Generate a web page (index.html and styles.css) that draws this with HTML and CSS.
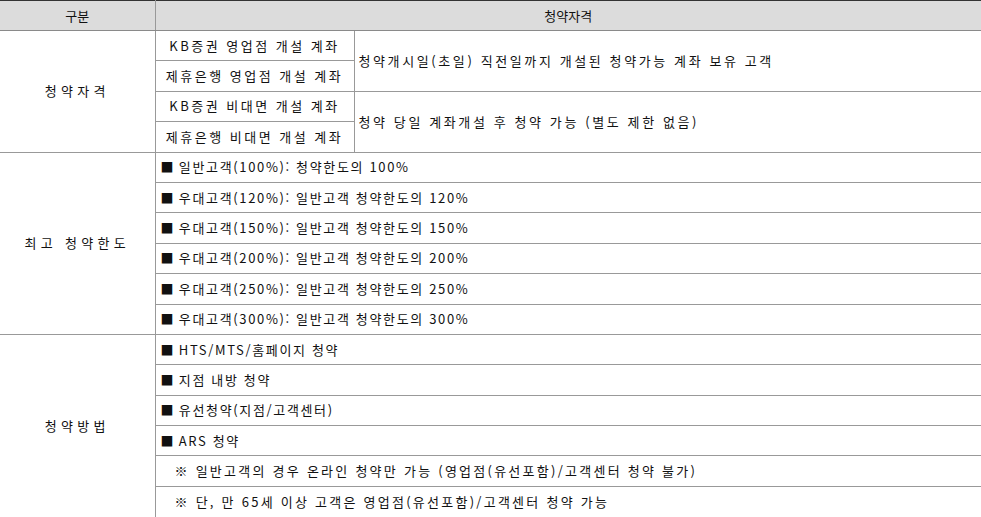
FILE: index.html
```html
<!DOCTYPE html>
<html lang="ko">
<head>
<meta charset="utf-8">
<link rel="stylesheet" href="styles.css">
</head>
<body>
<table class="info">
  <colgroup>
    <col class="c1">
    <col class="c2">
    <col class="c3">
  </colgroup>
  <thead>
    <tr class="head">
      <th>구분</th>
      <th colspan="2">청약자격</th>
    </tr>
  </thead>
  <tbody>
    <tr>
      <td rowspan="4" class="label">청약자격</td>
      <td class="center">KB증권 영업점 개설 계좌</td>
      <td rowspan="2" class="desc">청약개시일(초일) 직전일까지 개설된 청약가능 계좌 보유 고객</td>
    </tr>
    <tr><td class="center">제휴은행 영업점 개설 계좌</td></tr>
    <tr>
      <td class="center">KB증권 비대면 개설 계좌</td>
      <td rowspan="2" class="desc">청약 당일 계좌개설 후 청약 가능 (별도 제한 없음)</td>
    </tr>
    <tr><td class="center">제휴은행 비대면 개설 계좌</td></tr>

    <tr>
      <td rowspan="6" class="label">최고 청약한도</td>
      <td colspan="2" class="item"><span class="sq">■</span> 일반고객(100%): 청약한도의 100%</td>
    </tr>
    <tr><td colspan="2" class="item"><span class="sq">■</span> 우대고객(120%): 일반고객 청약한도의 120%</td></tr>
    <tr><td colspan="2" class="item"><span class="sq">■</span> 우대고객(150%): 일반고객 청약한도의 150%</td></tr>
    <tr><td colspan="2" class="item"><span class="sq">■</span> 우대고객(200%): 일반고객 청약한도의 200%</td></tr>
    <tr><td colspan="2" class="item"><span class="sq">■</span> 우대고객(250%): 일반고객 청약한도의 250%</td></tr>
    <tr><td colspan="2" class="item"><span class="sq">■</span> 우대고객(300%): 일반고객 청약한도의 300%</td></tr>

    <tr>
      <td rowspan="6" class="label">청약방법</td>
      <td colspan="2" class="item"><span class="sq">■</span> HTS/MTS/홈페이지 청약</td>
    </tr>
    <tr><td colspan="2" class="item"><span class="sq">■</span> 지점 내방 청약</td></tr>
    <tr><td colspan="2" class="item"><span class="sq">■</span> 유선청약(지점/고객센터)</td></tr>
    <tr><td colspan="2" class="item"><span class="sq">■</span> ARS 청약</td></tr>
    <tr><td colspan="2" class="item note">※ 일반고객의 경우 온라인 청약만 가능 (영업점(유선포함)/고객센터 청약 불가)</td></tr>
    <tr class="last"><td colspan="2" class="item note">※ 단, 만 65세 이상 고객은 영업점(유선포함)/고객센터 청약 가능</td></tr>
  </tbody>
</table>
</body>
</html>
```

FILE: styles.css
```css
html, body {
  margin: 0;
  padding: 0;
  background: #ffffff;
}

body {
  font-family: "Noto Sans CJK KR", "Noto Sans", sans-serif;
  font-size: 13px;
  color: #111111;
}

.info {
  width: 981px;
  border-collapse: collapse;
  table-layout: fixed;
  border-top: 1px solid #333333;
}

.c1 { width: 155px; }
.c2 { width: 199px; }
.c3 { width: 627px; }

.info th,
.info td {
  border: 1px solid #999999;
  padding: 0 4px;
  height: 29.4px;
  line-height: 16px;
  vertical-align: middle;
  white-space: nowrap;
}

.info tr > :first-child { border-left: none; }
.info tr > :last-child { border-right: none; }
.info .label { border-left: none; }

.info .head th {
  background: #dcdcdc;
  font-weight: normal;
  text-align: center;
  border-top: 1px solid #333333;
  border-bottom: 1px solid #8a8a8a;
  height: 29px;
}

.info .label {
  text-align: center;
  letter-spacing: 4.3px;
}

.info .center {
  text-align: center;
  letter-spacing: 2.5px;
}

.info .desc {
  text-align: left;
  letter-spacing: 2.6px;
}

.info .item {
  text-align: left;
  padding-left: 5px;
  letter-spacing: 1.65px;
}

.info .note {
  padding-left: 19px;
  letter-spacing: 2.25px;
}

.info .last td {
  height: 30.5px;
}

.sq {
  letter-spacing: 0;
}
```
